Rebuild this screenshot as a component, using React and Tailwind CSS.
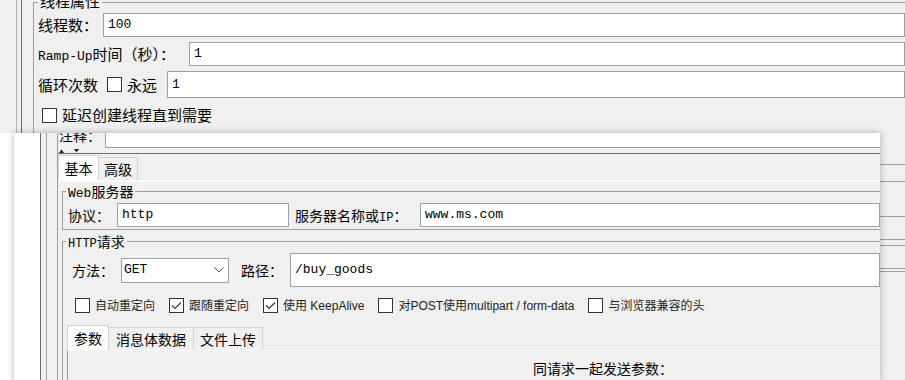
import React from "react";

const cjk = "font-['Noto_Sans_CJK_SC',sans-serif]";
const mono = "font-['Liberation_Mono','Noto_Sans_CJK_SC',monospace]";
const sans = "font-['Liberation_Sans','Noto_Sans_CJK_SC',sans-serif]";

const Box = ({ checked }) => (
  <span className="flex h-[15px] w-[15px] shrink-0 items-center justify-center border border-[#333333] bg-white">
    {checked && (
      <svg width="11" height="9" viewBox="0 0 11 9">
        <path d="M1 4.5 L4 7.5 L10 1.5" fill="none" stroke="#3a3a3a" strokeWidth="1.2" />
      </svg>
    )}
  </span>
);

const Field = ({ className, children }) => (
  <div className={`flex items-center border border-[#a0a0a0] bg-white pl-[4px] text-[13px] text-black ${mono} ${className}`}>
    {children}
  </div>
);

const Opt = ({ checked, children, first }) => (
  <div className={`flex items-center ${first ? "" : "ml-[14px]"}`}>
    <Box checked={checked} />
    <span className="ml-[5px] whitespace-nowrap text-[12px] leading-[16px] text-[#1e1e1e]">{children}</span>
  </div>
);

const Tab = ({ active, children, className }) => (
  <div
    className={`flex items-center justify-center border-r border-[#d4d4d4] text-[14px] leading-[16px] ${
      active ? "h-[25px] border-l border-t bg-white" : "h-[23px] border-t bg-[#f0f0f0]"
    } ${className}`}
  >
    {children}
  </div>
);

const Legend = ({ children }) => (
  <div className="-mt-[9px] ml-[3px] h-[16px] w-fit whitespace-nowrap bg-[#f0f0f0] px-[2px] text-[14px] leading-[16px]">
    {children}
  </div>
);

const BackWindow = () => (
  <div className={`flex h-full ${cjk}`}>
    <div className="w-[16px] shrink-0" />
    <div className="w-[5px] shrink-0 border-l border-[#b4b4b4]" />
    <div className="w-[12px] shrink-0 border-l border-[#6e6e6e]" />
    <div className="mt-[2px] flex min-w-0 flex-1 flex-col border-l border-t border-[#a0a0a0] text-[15px]">
      <div className="-mt-[11px] ml-[4px] h-[17px] w-fit bg-[#f0f0f0] px-[2px] leading-[17px]">线程属性</div>

      <div className="mt-[4px] flex h-[24px] items-center pl-[4px]">
        <span className="w-[65px] shrink-0 leading-[18px]">线程数：</span>
        <Field className="h-[24px] flex-1">100</Field>
      </div>

      <div className="mt-[5px] flex h-[24px] items-center pl-[4px]">
        <span className="block h-[18px] w-[151px] shrink-0 whitespace-nowrap leading-[18px]">
          <span className={`text-[13px] leading-[18px] ${mono}`}>Ramp-Up</span>时间（秒）：
        </span>
        <Field className="h-[24px] flex-1">1</Field>
      </div>

      <div className="mt-[5px] flex h-[27px] items-center pl-[4px]">
        <span className="w-[60px] shrink-0 leading-[18px]">循环次数</span>
        <span className="ml-[9px]">
          <Box />
        </span>
        <span className="ml-[5px] w-[30px] shrink-0 leading-[18px]">永远</span>
        <Field className="ml-[10px] h-[27px] flex-1">1</Field>
      </div>

      <div className="mt-[8px] flex h-[18px] items-center pl-[8px]">
        <Box />
        <span className="ml-[5px] leading-[18px]">延迟创建线程直到需要</span>
      </div>

      <div className="mt-[40px] h-[17px] border-t border-[#a0a0a0]" />
      <div className="h-[35px] border-t border-[#a0a0a0]" />
      <div className="h-[23px] border-t border-[#a0a0a0]" />
      <div className="h-[6px] border-t border-[#a0a0a0]" />
      <div className="h-[23px] border-t border-[#a0a0a0]" />
      <div className="h-[3px] border-t border-[#a0a0a0]" />
      <div className="h-[3px] border-t border-[#a0a0a0]" />
    </div>
  </div>
);

const FrontWindow = () => (
  <div className={`absolute left-0 top-[133px] flex h-[247px] w-[880px] ${cjk}`}>
    <div className="w-[14px] shrink-0 bg-white" />
    <div className="flex w-[866px] shrink-0 overflow-hidden bg-[#f0f0f0] shadow-[0_0_7px_rgba(0,0,0,0.3)]">
      <div className="w-[26px] shrink-0 bg-white" />
      <div className="w-[6px] shrink-0 border-l border-[#6e6e6e]" />
      <div className="w-[11px] shrink-0 border-l border-[#a0a0a0]" />

      <div className="flex min-w-0 flex-1 flex-col border-l border-[#a0a0a0]">
        {/* comment row, scrolled half out of view */}
        <div className="flex h-[15px] shrink-0 overflow-hidden">
          <div className="-mt-[6px] h-[16px] w-[47px] shrink-0 pl-[1px] text-[14px] leading-[16px]">注释：</div>
          <div className="h-[15px] flex-1 border-b border-l border-[#a0a0a0] bg-white" />
        </div>

        {/* split pane arrows */}
        <div className="flex h-[5px] shrink-0 items-start pl-[1px] pt-[1px]">
          <svg width="20" height="4" viewBox="0 0 20 4">
            <path d="M0 4 L2.5 0.5 L5 4 Z" fill="#222" />
            <path d="M15 0 L20 0 L17.5 3.5 Z" fill="#222" />
          </svg>
        </div>

        {/* tabs: 基本 / 高级 */}
        <div className="flex h-[27px] shrink-0 items-end border-t border-[#6e6e6e]">
          <Tab active className="w-[41px] border-[#d4d4d4]">基本</Tab>
          <Tab className="w-[39px] border-[#d4d4d4]">高级</Tab>
        </div>

        <div className="flex min-h-0 flex-1 flex-col border-t-2 border-[#fbfbfb] pl-[4px]">
          {/* Web服务器 */}
          <div className="mt-[9px] flex shrink-0 flex-col border-b border-l border-t border-[#a0a0a0] pb-[2px] text-[14px]">
            <Legend>
              <span className={`text-[13px] leading-[16px] ${mono}`}>Web</span>服务器
            </Legend>
            <div className="mt-[4px] flex h-[24px] items-center pl-[5px]">
              <span className="w-[49px] shrink-0 leading-[16px]">协议：</span>
              <Field className="h-[24px] w-[172px] shrink-0">http</Field>
              <span className="ml-[6px] block h-[16px] w-[125px] shrink-0 whitespace-nowrap leading-[16px]">
                服务器名称或<span className={`text-[12px] leading-[16px] ${mono}`}>IP</span>：
              </span>
              <Field className="h-[24px] flex-1 text-[12px]">www.ms.com</Field>
            </div>
          </div>

          {/* HTTP请求 */}
          <div className="mt-[11px] flex min-h-0 flex-1 flex-col border-l border-t border-[#a0a0a0] text-[14px]">
            <Legend>
              <span className={`text-[12px] leading-[16px] ${mono}`}>HTTP</span>请求
            </Legend>
            <div className="mt-[4px] flex h-[34px] shrink-0 items-center pl-[9px]">
              <span className="w-[49px] shrink-0 leading-[16px]">方法：</span>
              <div className={`flex h-[25px] w-[108px] shrink-0 items-center justify-between border border-[#a0a0a0] bg-white pl-[2px] pr-[4px] text-[13px] ${mono}`}>
                <span>GET</span>
                <svg width="10" height="6" viewBox="0 0 10 6">
                  <path d="M0.5 0.5 L5 5 L9.5 0.5" fill="none" stroke="#555" strokeWidth="1" />
                </svg>
              </div>
              <span className="ml-[12px] w-[49px] shrink-0 leading-[16px]">路径：</span>
              <Field className="h-[34px] flex-1">/buy_goods</Field>
            </div>

            <div className={`mt-[8px] flex h-[21px] shrink-0 items-center pl-[12px] ${sans}`}>
              <Opt first>自动重定向</Opt>
              <Opt checked>跟随重定向</Opt>
              <Opt checked>使用 KeepAlive</Opt>
              <Opt>对POST使用multipart / form-data</Opt>
              <Opt>与浏览器兼容的头</Opt>
            </div>

            <div className="ml-[4px] mt-[9px] flex min-h-0 flex-1 flex-col">
              <div className="flex h-[25px] shrink-0 items-end">
                <Tab active className="w-[42px] border-[#d4d4d4]">参数</Tab>
                <Tab className="w-[85px] border-[#d4d4d4]">消息体数据</Tab>
                <Tab className="w-[69px] border-[#d4d4d4]">文件上传</Tab>
              </div>
              <div className="flex-1 border-l border-t border-l-[#a0a0a0] border-t-[#fbfbfb] pl-[465px] pt-[9px] text-[14px] leading-[16px]">
                同请求一起发送参数：
              </div>
            </div>
          </div>
        </div>
      </div>
    </div>
  </div>
);

export default function App() {
  return (
    <div className="relative h-[380px] w-[905px] overflow-hidden bg-[#f0f0f0] text-black">
      <BackWindow />
      <FrontWindow />
    </div>
  );
}
